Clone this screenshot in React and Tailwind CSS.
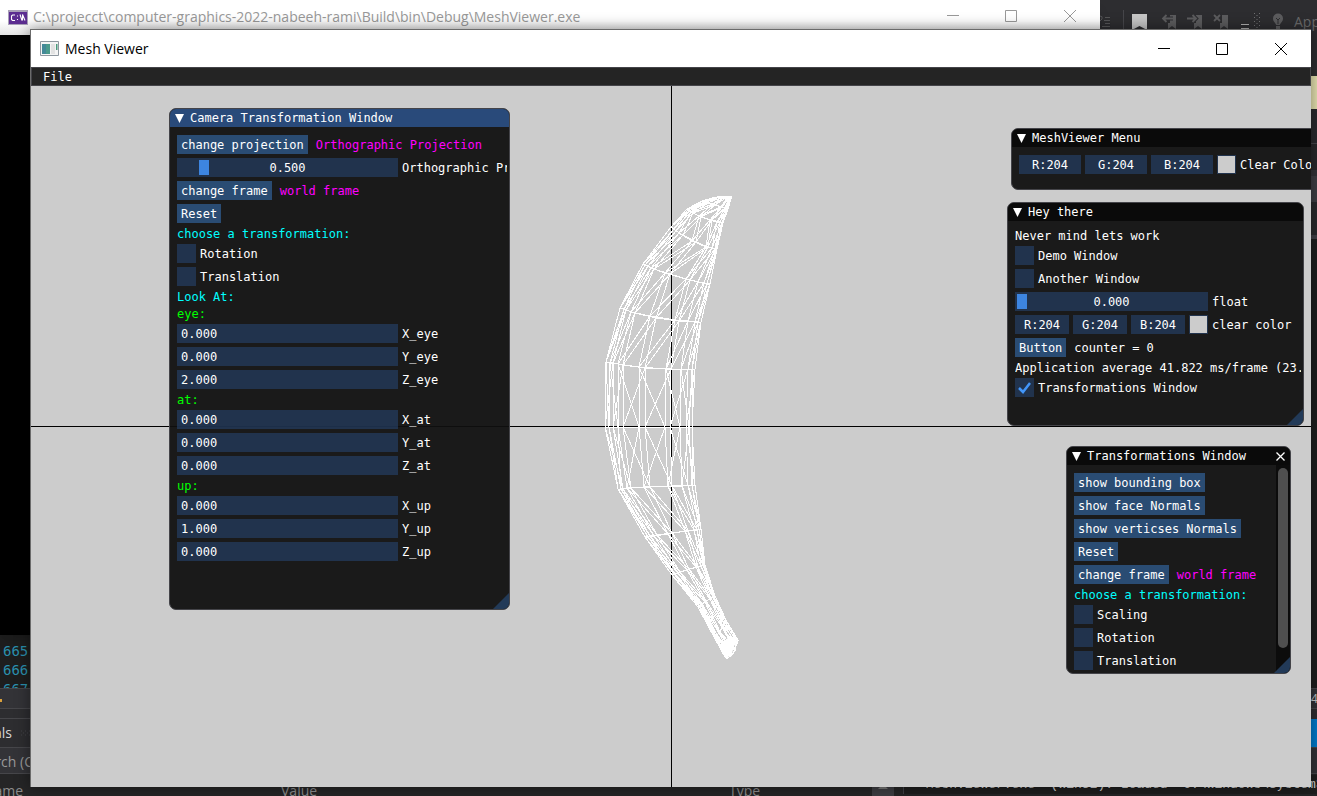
import React from "react";

const WHITE = "text-white";
const CYAN = "text-[#00ffff]";
const GREEN = "text-[#00ff00]";
const MAGENTA = "text-[#ff00ff]";

/* ---------- wireframe mesh ---------- */

// Each ring: left, middle and right point of the cross-section.
const RINGS = [
  [[716, 197], [725, 196], [732, 196]],
  [[702, 201], [716, 205], [728, 209]],
  [[687, 209], [702, 217], [723, 223]],
  [[671, 227], [697, 243], [717, 249]],
  [[643, 264], [672, 275], [710, 284]],
  [[620, 308], [658, 318], [701, 322]],
  [[606, 362], [648, 368], [695, 369]],
  [[605, 427], [648, 427], [692, 427]],
  [[618, 489], [652, 487], [695, 485]],
  [[645, 537], [674, 533], [701, 529]],
  [[672, 575], [690, 569], [705, 565]],
  [[698, 607], [707, 601], [715, 596]],
  [[714, 637], [720, 631], [726, 620]],
  [[725, 657], [732, 655], [738, 640]],
];
const FRONT = [0, 0.09, 0.21, 0.47, 0.75, 0.93, 1];
const BACK = [0, 0.05, 0.15, 0.4, 0.7, 0.86, 0.97, 1];

function ringPoint([a, m, b], t) {
  const l0 = (1 - t) * (1 - 2 * t);
  const l1 = 4 * t * (1 - t);
  const l2 = t * (2 * t - 1);
  const at = (k) => Math.round(l0 * a[k] + l1 * m[k] + l2 * b[k]);
  return at(0) + "," + at(1);
}

function meshPath() {
  const out = [];
  const line = (p, q) => out.push("M" + p + "L" + q);
  [FRONT, BACK].forEach((stops, side) => {
    RINGS.forEach((ring, r) => {
      const next = RINGS[r + 1];
      stops.forEach((t, i) => {
        const p = ringPoint(ring, t);
        if (i + 1 < stops.length) line(p, ringPoint(ring, stops[i + 1]));
        if (!next) return;
        line(p, ringPoint(next, t));
        const forward = side === 0 ? r < 7 : r < 6 || r === 7;
        if (i + 1 < stops.length) {
          if (forward) line(ringPoint(ring, stops[i + 1]), ringPoint(next, t));
          else line(p, ringPoint(next, stops[i + 1]));
        }
      });
    });
  });
  return out.join("");
}

const MESH = meshPath();

function Mesh() {
  return (
    <svg
      className="absolute top-1/2 left-1/2 h-[480px] w-[160px] -translate-x-1/2 -translate-y-1/2"
      viewBox="591 187 160 480"
      aria-hidden="true"
    >
      <path d={MESH} fill="none" stroke="#fff" strokeWidth="1" shapeRendering="crispEdges" />
      <path d="M725 656l6 1 3-11 4-5-8-5-9 8z" fill="#fff" />
    </svg>
  );
}

/* ---------- widgets ---------- */

function Panel({ title, active, close, scroll, className, children }) {
  return (
    <section
      className={
        "absolute flex flex-col overflow-hidden rounded-[7px] border border-[#444449] bg-[#0f0f0f]/94 font-['DejaVu_Sans_Mono','Liberation_Mono',monospace] text-[12px] leading-[13px] whitespace-nowrap text-white " +
        className
      }
    >
      <header
        className={
          "flex h-[18px] shrink-0 items-center gap-[5px] pr-[3px] pl-1 " +
          (active ? "bg-[#294a7a]" : "bg-[#0a0a0a]")
        }
      >
        <svg className="size-[11px]" viewBox="0 0 11 11" aria-hidden="true">
          <path d="M1 1h9L5.500 10z" fill="#fff" />
        </svg>
        <h2 className="flex-1">{title}</h2>
        {close && (
          <button type="button" aria-label="Close" className="flex size-[13px] items-center justify-center">
            <svg className="size-[9px]" viewBox="0 0 9 9" aria-hidden="true">
              <path d="M.5.5l8 8M8.500.5l-8 8" stroke="#fff" strokeWidth="1.300" />
            </svg>
          </button>
        )}
      </header>
      <div className="flex min-h-0 flex-1">
        <div className="mr-[2px] ml-[7px] flex min-w-0 flex-1 flex-col items-start gap-1 overflow-hidden pt-2">
          {children}
        </div>
        {scroll && (
          <div className="w-[14px] shrink-0 bg-[#0c0c0c] px-[2px] py-[3px]">
            <div className="h-[180px] rounded-full bg-[#4f4f4f]" />
          </div>
        )}
      </div>
      <svg className="absolute right-0 bottom-0 size-4" viewBox="0 0 16 16" aria-hidden="true">
        <path d="M16 0v16H0z" fill="#223a58" />
      </svg>
    </section>
  );
}

function Btn({ children }) {
  return (
    <button type="button" className="h-[19px] shrink-0 bg-[#2a4c73] px-1 pt-[2px]">
      {children}
    </button>
  );
}

function Text({ color = WHITE, children }) {
  return <span className={"block h-[13px] shrink-0 leading-[15px] " + color}>{children}</span>;
}

function Row({ children }) {
  return <div className="flex h-[19px] shrink-0 items-center gap-2">{children}</div>;
}

function Check({ label, checked }) {
  return (
    <label className="relative flex h-[19px] shrink-0 items-center gap-1">
      <input
        type="checkbox"
        defaultChecked={checked}
        className="peer size-[19px] appearance-none bg-[#294a7a]/54"
      />
      <svg
        className="pointer-events-none absolute top-[3px] left-[3px] hidden size-[13px] peer-checked:block"
        viewBox="0 0 13 13"
        aria-hidden="true"
      >
        <path d="M1 7l4 4 7-9" fill="none" stroke="#4296fa" strokeWidth="2.500" />
      </svg>
      <Text>{label}</Text>
    </label>
  );
}

function Slider({ label, value, max, width }) {
  return (
    <label className="relative flex h-[19px] shrink-0 items-center gap-1">
      <span className={"relative flex h-[19px] shrink-0 " + width}>
        <input
          type="range"
          min="0"
          max={max}
          step="0.001"
          defaultValue={value}
          className="h-[19px] w-full appearance-none bg-[#294a7a]/54 px-[2px] [&::-webkit-slider-thumb]:h-[15px] [&::-webkit-slider-thumb]:w-[10px] [&::-webkit-slider-thumb]:appearance-none [&::-webkit-slider-thumb]:bg-[#3d85e0]"
        />
        <output className="pointer-events-none absolute inset-0 text-center leading-[21px]">
          {value.toFixed(3)}
        </output>
      </span>
      <Text>{label}</Text>
    </label>
  );
}

function Field({ label, value }) {
  return (
    <label className="flex h-[19px] shrink-0 items-center gap-1">
      <input
        type="text"
        defaultValue={value}
        className="h-[19px] w-[221px] bg-[#294a7a]/54 px-1 pt-px"
      />
      <Text>{label}</Text>
    </label>
  );
}

function ColorEdit({ label, width }) {
  return (
    <div className="flex h-[19px] shrink-0 items-center gap-1">
      {["R", "G", "B"].map((c) => (
        <input
          key={c}
          type="text"
          aria-label={label + " " + c}
          defaultValue={c + ":204"}
          className={"h-[19px] bg-[#294a7a]/54 pt-px text-center " + width}
        />
      ))}
      <button type="button" aria-label="Pick color" className="size-[19px] border border-[#22344e] bg-[#cccccc]" />
      <Text>{label}</Text>
    </div>
  );
}

/* ---------- window chrome ---------- */

function Caption({ color, className }) {
  return (
    <div className={"flex h-full items-center " + className}>
      <button type="button" aria-label="Minimize" className="flex w-[58px] justify-center">
        <svg className="size-3" viewBox="0 0 12 12" aria-hidden="true">
          <path d="M0 5.500h12" stroke={color} />
        </svg>
      </button>
      <button type="button" aria-label="Maximize" className="flex w-[58px] justify-center">
        <svg className="size-3" viewBox="0 0 12 12" aria-hidden="true">
          <path d="M.5.5h11v11H.5z" fill="none" stroke={color} />
        </svg>
      </button>
      <button type="button" aria-label="Close window" className="flex w-[60px] justify-center">
        <svg className="size-3" viewBox="0 0 12 12" aria-hidden="true">
          <path d="M0 0l12 12M12 0L0 12" stroke={color} />
        </svg>
      </button>
    </div>
  );
}

function Flag({ mark, fill }) {
  return (
    <svg className="h-4 w-[17px]" viewBox="0 0 17 16" aria-hidden="true">
      <path d="M9 1h6v14l-4-3-4 3V9h2z" fill={fill} />
      <path d={mark} fill="none" stroke="#2d2d30" strokeWidth="4" />
      <path d={mark} fill="none" stroke={fill} strokeWidth="1.800" />
    </svg>
  );
}

function Ide() {
  return (
    <div className="absolute inset-0 flex flex-col bg-[#1e1e1e] font-['Open_Sans','Noto_Sans',sans-serif] text-[14px] leading-[19px] whitespace-nowrap text-[#8c8c8c]">
      <div className="flex h-[76px] shrink-0 items-start justify-end bg-[#2d2d30]">
        <div className="flex h-9 w-[217px] items-center overflow-hidden pt-[7px] text-[#6a6a6a]">
          <svg className="h-4 w-3 shrink-0" viewBox="0 0 12 16" aria-hidden="true">
            <path d="M0 2q3 0 2 3l-2 2M5 3.500h5M4 6.500h6M5 9.500h5M2 12.500h8" stroke="#565658" fill="none" />
          </svg>
          <div className="mr-[8px] ml-[11px] h-6 w-px shrink-0 bg-[#46464a]" />
          <svg className="h-4 w-[15px] shrink-0" viewBox="0 0 15 16" aria-hidden="true">
            <path d="M0 0h15v16l-7.500-4L0 16z" fill="#c6c6c6" />
          </svg>
          <div className="ml-[14px] flex shrink-0 gap-[9px]">
            <Flag fill="#5c5c5e" mark="M12 4.500H2M5.500 1L2 4.500 5.500 8" />
            <Flag fill="#5c5c5e" mark="M0 4.500h9M5.500 1L9 4.500 5.500 8" />
            <Flag fill="#5c5c5e" mark="M1 1l6 6M7 1L1 7" />
          </div>
          <svg className="ml-[11px] h-4 w-2 shrink-0" viewBox="0 0 8 16" aria-hidden="true">
            <path d="M0 10.500h8M0 14.500h8" stroke="#b0b0b0" />
          </svg>
          <svg className="ml-[5px] h-[18px] w-[6px] shrink-0" viewBox="0 0 6 18" aria-hidden="true">
            <path d="M.5 0v18M5.500 0v18M3 2v16" stroke="#707072" strokeDasharray="1 3" />
          </svg>
          <svg className="mr-[10px] ml-3 h-[18px] w-3 shrink-0" viewBox="0 0 12 18" aria-hidden="true">
            <path d="M4 12C4 10 1 9 1 5.500a5 5 0 0 1 10 0C11 9 8 10 8 12zM4 13h4v3H4z" fill="#5c5c5e" />
            <path d="M4 5l2 2 2-2M6 7v4" stroke="#2d2d30" fill="none" />
          </svg>
          <span>App</span>
        </div>
      </div>
      <div className="flex min-h-0 flex-1 items-stretch justify-between">
        <div className="flex w-[31px] flex-col justify-end overflow-hidden pl-[3px] font-['DejaVu_Sans_Mono',monospace] text-[14px] leading-[19px] text-[#2b91af]">
          <span className="h-[19px]">665</span>
          <span className="h-[19px]">666</span>
          <span className="h-[8px] overflow-hidden">667</span>
        </div>
        <div className="flex w-[6px] flex-col">
          <div className="h-[33px] bg-[#e6e2b0]" />
          <div className="h-[34px] bg-[#2a2a2e]" />
          <div className="h-px bg-[#46464a]" />
          <div className="h-[26px] bg-[#28282b]" />
          <div className="h-[6px] bg-[#333338]" />
          <div className="h-[26px] bg-[#3e3e44]" />
          <div className="h-[33px] bg-[#2a2a2d]" />
          <div className="h-[4px] bg-[#3f3f46]" />
        </div>
      </div>
      <div className="flex h-[108px] shrink-0 flex-col overflow-hidden bg-[#252526]">
        <div className="flex h-[21px] shrink-0 items-center justify-between border-t border-b border-[#46464a] bg-[#333337]">
          <span className="mt-1 h-[3px] w-[2px] bg-[#d9a03c]" />
          <span className="w-[6px] overflow-hidden text-[12px] text-[#c8c8c8]">40</span>
        </div>
        <div className="flex h-[38px] shrink-0 items-center justify-between bg-[#2d2d30]">
          <div className="mt-[9px] flex h-[29px] w-[31px] items-center gap-[9px] overflow-hidden border-t border-[#46464a] pb-px text-[#d8d8d8]">
            <span className="flex w-[12px] shrink-0 justify-end">Locals</span>
            <svg className="h-[6px] w-[10px] shrink-0" viewBox="0 0 10 6" aria-hidden="true">
              <path d="M0 1h10M2 3h8M0 5h10" stroke="#444448" strokeDasharray="1 3" />
            </svg>
          </div>
          <div className="mt-[10px] h-[28px] w-[6px] self-start bg-[#007acc]" />
        </div>
        <div className="flex h-[27px] shrink-0 items-center border-t border-b border-[#46464a] bg-[#333337] pt-px text-[#999]">
          <div className="flex w-[33px] justify-end overflow-hidden">Search (C</div>
        </div>
        <div className="flex flex-1 items-start bg-[#252526] pt-[7px]">
          <div className="flex w-[23px] shrink-0 justify-end">Name</div>
          <div className="w-[258px] shrink-0" />
          <div className="w-[448px] shrink-0">Value</div>
          <div className="flex h-5 w-[174px] shrink-0 justify-between">
            <span>Type</span>
            <svg className="mr-[9px] h-4 w-[22px] shrink-0 bg-[#3e3e42]" viewBox="0 0 22 16" aria-hidden="true">
              <path d="M6 8l5-5 5 5z" fill="#777" />
            </svg>
          </div>
          <div className="-mt-[6px] min-w-0 flex-1 overflow-hidden border-l border-[#3f3f46] bg-[#1e1e1e] pl-[14px] font-['Liberation_Mono',monospace] text-[13px] text-[#d0d0d0]">
            'MeshViewer.exe' (Win32): Loaded 'C:\Windows\System32'
          </div>
        </div>
      </div>
    </div>
  );
}

export default function App() {
  return (
    <div className="relative h-screen overflow-hidden bg-[#1e1e1e]">
      <Ide />

      <div className="absolute top-0 right-[217px] bottom-[161px] left-0 flex flex-col bg-black shadow-lg">
        <div className="flex h-[35px] shrink-0 items-center bg-linear-to-b from-white from-60% to-[#e4e4e4] pl-[8px]">
          <svg className="mr-[5px] h-[15px] w-5 shrink-0" viewBox="0 0 20 15" aria-hidden="true">
            <path d="M0 0h20v15H0z" fill="#a9a0b8" />
            <path d="M1 2h18v12H1z" fill="#5c2d91" />
            <path d="M7 5H4.500L3.500 6v3.500l1 1H7M9.500 5.500v1M9.500 9v1M12 4.500l2 6M14.500 10.500v-6l2.500 6" stroke="#fff" strokeWidth="1.100" fill="none" />
          </svg>
          <h1 className="flex-1 overflow-hidden pb-[2px] font-['Open_Sans','Noto_Sans',sans-serif] text-[14px] leading-5 whitespace-nowrap text-[#999]">
            C:\projecct\computer-graphics-2022-nabeeh-rami\Build\bin\Debug\MeshViewer.exe
          </h1>
          <Caption color="#999" className="pb-[3px]" />
        </div>
      </div>

      <div className="absolute top-[29px] right-[6px] bottom-[9px] left-[30px] flex flex-col border-t border-l border-[#6b6b6b] bg-[#cccccc] shadow-[0_0_14px_rgba(0,0,0,0.45)]">
        <div className="flex h-[37px] shrink-0 items-center bg-white pl-[9px]">
          <svg className="mr-[6px] h-[15px] w-[19px] shrink-0" viewBox="0 0 19 15" aria-hidden="true">
            <path d="M.5.5h18v14H.5z" fill="#f4f4f4" stroke="#8e979f" />
            <path d="M2 3h8v10H2z" fill="#4a9a8c" />
            <path d="M2 3h4v10H2z" fill="#3f7fa0" opacity=".6" />
            <path d="M11 3h4v10h-4z" fill="#e2e2e2" />
            <path d="M16 3h1.500v6H16z" fill="#4a9a7c" />
          </svg>
          <h1 className="flex-1 font-['Open_Sans','Noto_Sans',sans-serif] text-[14px] leading-5 text-black">
            Mesh Viewer
          </h1>
          <Caption color="#000" className="" />
        </div>

        <main className="relative min-h-0 flex-1 overflow-hidden bg-[#cccccc]">
          <div className="absolute inset-y-0 left-1/2 w-px bg-black" />
          <div className="absolute inset-x-0 top-1/2 h-px -translate-y-px bg-black" />
          <Mesh />

          <nav className="relative flex h-[19px] items-center border border-[#444449] bg-[#242424] font-['DejaVu_Sans_Mono','Liberation_Mono',monospace] text-[12px] leading-[13px] text-white">
            <button type="button" className="px-[11px] pt-[2px]">File</button>
          </nav>

          <Panel title="Camera Transformation Window" active className="top-[41px] left-[138px] h-[502px] w-[341px]">
            <Row>
              <Btn>change projection</Btn>
              <Text color={MAGENTA}>Orthographic Projection</Text>
            </Row>
            <Slider label="Orthographic Projection" value={0.5} max="5.2" width="w-[221px]" />
            <Row>
              <Btn>change frame</Btn>
              <Text color={MAGENTA}>world frame</Text>
            </Row>
            <Btn>Reset</Btn>
            <Text color={CYAN}>choose a transformation:</Text>
            <Check label="Rotation" />
            <Check label="Translation" />
            <Text color={CYAN}>Look At:</Text>
            <Text color={GREEN}>eye:</Text>
            <Field label="X_eye" value="0.000" />
            <Field label="Y_eye" value="0.000" />
            <Field label="Z_eye" value="2.000" />
            <Text color={GREEN}>at:</Text>
            <Field label="X_at" value="0.000" />
            <Field label="Y_at" value="0.000" />
            <Field label="Z_at" value="0.000" />
            <Text color={GREEN}>up:</Text>
            <Field label="X_up" value="0.000" />
            <Field label="Y_up" value="1.000" />
            <Field label="Z_up" value="0.000" />
          </Panel>

          <Panel title="MeshViewer Menu" className="top-[61px] right-[-34px] h-[62px] w-[334px]">
            <ColorEdit label="Clear Color" width="w-[62px]" />
          </Panel>

          <Panel title="Hey there" className="top-[135px] right-[7px] h-[224px] w-[297px]">
            <Text>Never mind lets work</Text>
            <Check label="Demo Window" />
            <Check label="Another Window" />
            <Slider label="float" value={0} max="1" width="w-[193px]" />
            <ColorEdit label="clear color" width="w-[54px]" />
            <Row>
              <Btn>Button</Btn>
              <Text>counter = 0</Text>
            </Row>
            <Text>Application average 41.822 ms/frame (23.9 FPS)</Text>
            <Check label="Transformations Window" checked />
          </Panel>

          <Panel title="Transformations Window" close scroll className="top-[379px] right-[20px] h-[228px] w-[225px]">
            <Btn>show bounding box</Btn>
            <Btn>show face Normals</Btn>
            <Btn>show verticses Normals</Btn>
            <Btn>Reset</Btn>
            <Row>
              <Btn>change frame</Btn>
              <Text color={MAGENTA}>world frame</Text>
            </Row>
            <Text color={CYAN}>choose a transformation:</Text>
            <Check label="Scaling" />
            <Check label="Rotation" />
            <Check label="Translation" />
          </Panel>
        </main>
      </div>
    </div>
  );
}
